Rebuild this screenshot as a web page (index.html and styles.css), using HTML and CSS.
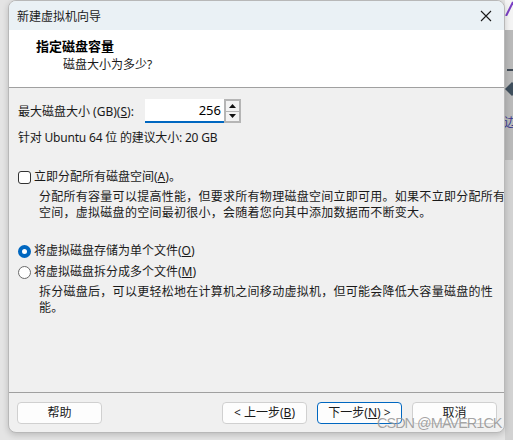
FILE: index.html
```html
<!DOCTYPE html>
<html lang="zh-CN">
<head>
<meta charset="utf-8">
<title>新建虚拟机向导</title>
<link rel="stylesheet" href="styles.css">
</head>
<body>
<div class="backdrop">
  <div class="bg-strip">
    <svg class="bg-line" width="8" height="16" viewBox="0 0 8 16"><path d="M1 16 L8 2" stroke="#7a3fc4" stroke-width="2" fill="none"/></svg>
    <div class="bg-dash"></div>
    <div class="bg-diamond"></div>
    <div class="bg-glyph">边</div>
  </div>
  <div class="window">
    <div class="titlebar">
      <span class="title">新建虚拟机向导</span>
      <svg class="close" width="12" height="12" viewBox="0 0 12 12"><path d="M1 1 L11 11 M11 1 L1 11" stroke="#1a1a1a" stroke-width="1.1" fill="none"/></svg>
    </div>
    <div class="header">
      <div class="h-title">指定磁盘容量</div>
      <div class="h-sub">磁盘大小为多少?</div>
    </div>
    <div class="content">
      <div class="size-row">
        <span class="label">最大磁盘大小 (GB)(<u>S</u>):</span>
        <div class="spin">
          <div class="spin-input">256</div>
          <div class="spin-btns">
            <div class="spin-btn"><svg width="7" height="4" viewBox="0 0 7 4"><path d="M0 4 L3.5 0 L7 4Z" fill="#111"/></svg></div>
            <div class="spin-btn"><svg width="7" height="4" viewBox="0 0 7 4"><path d="M0 0 L3.5 4 L7 0Z" fill="#111"/></svg></div>
          </div>
        </div>
      </div>
      <div class="recommend">针对 Ubuntu 64 位 的建议大小: 20 GB</div>
      <div class="option check-row">
        <span class="checkbox"></span>
        <span>立即分配所有磁盘空间(<u>A</u>)。</span>
      </div>
      <p class="desc">分配所有容量可以提高性能，但要求所有物理磁盘空间立即可用。如果不立即分配所有<br>空间，虚拟磁盘的空间最初很小，会随着您向其中添加数据而不断变大。</p>
      <div class="option radio-row first">
        <span class="radio checked"></span>
        <span>将虚拟磁盘存储为单个文件(<u>O</u>)</span>
      </div>
      <div class="option radio-row second">
        <span class="radio"></span>
        <span>将虚拟磁盘拆分成多个文件(<u>M</u>)</span>
      </div>
      <p class="desc desc2">拆分磁盘后，可以更轻松地在计算机之间移动虚拟机，但可能会降低大容量磁盘的性<br>能。</p>
    </div>
    <div class="footer">
      <button class="btn">帮助</button>
      <div class="spacer"></div>
      <button class="btn">&lt; 上一步(<u>B</u>)</button>
      <button class="btn primary">下一步(<u>N</u>) &gt;</button>
      <button class="btn">取消</button>
    </div>
  </div>
  <div class="watermark">CSDN @MAVER1CK</div>
</div>
</body>
</html>
```

FILE: styles.css
```css
* { box-sizing: border-box; }

html, body {
  margin: 0;
  padding: 0;
}

body {
  width: 513px;
  height: 440px;
  overflow: hidden;
  background: #e4e4e4;
  font-family: "Noto Sans", "Noto Sans CJK SC", sans-serif;
  font-size: 12px;
  color: #1a1a1a;
}

.backdrop {
  position: relative;
  width: 513px;
  height: 440px;
  padding-left: 8px;
}

.bg-strip {
  position: absolute;
  left: 505px;
  top: 0;
  width: 8px;
  height: 440px;
  overflow: hidden;
  background: linear-gradient(#f4f4f4 0, #f4f4f4 30px, #b9b9b9 30px, #b9b9b9 160px, #d2d2d2 160px, #d2d2d2 100%);
}

.bg-line { position: absolute; left: 0; top: 0; }
.bg-dash { position: absolute; left: 2px; top: 69px; width: 6px; height: 2px; background: #404a55; }
.bg-diamond { position: absolute; left: 2px; top: 84px; width: 10px; height: 10px; background: #3e4e5c; transform: rotate(45deg); }
.bg-glyph { position: absolute; left: -1px; top: 116px; font-size: 12px; line-height: 14px; color: #3a3a90; }

.window {
  position: relative;
  width: 497px;
  height: 433px;
  border: 1px solid #b8b8b8;
  border-radius: 8px;
  background: #f0f0f0;
  overflow: hidden;
  box-shadow: 0 2px 6px rgba(0,0,0,0.18);
  display: flex;
  flex-direction: column;
}

.titlebar {
  height: 29px;
  flex: none;
  background: #eaf1f5;
  display: flex;
  align-items: center;
  padding: 0 12px 0 8px;
}

.title { flex: 1; font-size: 12px; color: #1b1b1b; }
.close { display: block; margin-top: 1px; }

.header {
  height: 58px;
  flex: none;
  background: #ffffff;
  border-bottom: 1px solid #a0a0a0;
  padding-top: 8px;
}

.h-title {
  padding-left: 27px;
  font-weight: bold;
  font-size: 13px;
  line-height: 17px;
  color: #000;
}

.h-sub {
  padding-left: 54px;
  line-height: 17px;
  margin-top: 1px;
}

.content {
  height: 304px;
  flex: none;
  padding: 11px 9px 0 9px;
}

.size-row {
  display: flex;
  align-items: center;
  height: 24px;
}

.label { width: 127px; flex: none; white-space: nowrap; }

.spin { display: flex; height: 24px; }

.spin-input {
  width: 79px;
  height: 24px;
  background: #fff;
  border-bottom: 2px solid #0067c0;
  text-align: right;
  padding-right: 3px;
  font-size: 13px;
  line-height: 22px;
  color: #000;
}

.spin-btns {
  width: 17px;
  height: 24px;
  border: 2px solid #b5b5b5;
  display: flex;
  flex-direction: column;
  background: #b5b5b5;
  gap: 1px;
}

.spin-btn {
  flex: 1;
  background: #f3f3f3;
  display: flex;
  align-items: center;
  justify-content: center;
}

.spin-btn svg { display: block; }

.recommend {
  margin-top: 7px;
  line-height: 16px;
  white-space: nowrap;
  letter-spacing: -0.2px;
}

.option {
  display: flex;
  align-items: center;
  height: 16px;
  line-height: 16px;
  white-space: nowrap;
}

.check-row { margin-top: 23px; }

.checkbox {
  width: 13px;
  height: 13px;
  border: 1px solid #333;
  border-radius: 3px;
  background: #fff;
  margin-right: 3px;
  flex: none;
}

.radio {
  width: 13px;
  height: 13px;
  border: 1px solid #6a6a6a;
  border-radius: 50%;
  background: #fff;
  margin-right: 3px;
  flex: none;
}

.radio.checked {
  border: 4px solid #0067c0;
  background: #fff;
}

.desc {
  margin: 4px 0 0 21px;
  line-height: 15.5px;
  letter-spacing: 0.27px;
  white-space: nowrap;
}

.radio-row.first { margin-top: 23px; }
.radio-row.second { margin-top: 5px; }
.desc2 { margin-top: 4px; }

.footer {
  flex: 1;
  border-top: 1px solid #a0a0a0;
  display: flex;
  align-items: flex-start;
  padding: 9px 7px 0 8px;
  gap: 10px;
}

.spacer { flex: 1; }

.btn {
  width: 85px;
  height: 22px;
  border: 1px solid #d0d0d0;
  border-radius: 4px;
  background: #fdfdfd;
  font-family: inherit;
  font-size: 12px;
  color: #1a1a1a;
  padding: 0;
  line-height: 18px;
  white-space: nowrap;
}

.btn.primary { border-color: #0067c0; }

.watermark {
  position: absolute;
  left: 377px;
  top: 415px;
  white-space: nowrap;
  font-family: "Liberation Sans", Arial, sans-serif;
  font-size: 14.5px;
  line-height: 17px;
  letter-spacing: -1px;
  color: rgba(125,125,125,0.7);
  text-shadow: 0 0 1px rgba(255,255,255,0.6);
}
```
